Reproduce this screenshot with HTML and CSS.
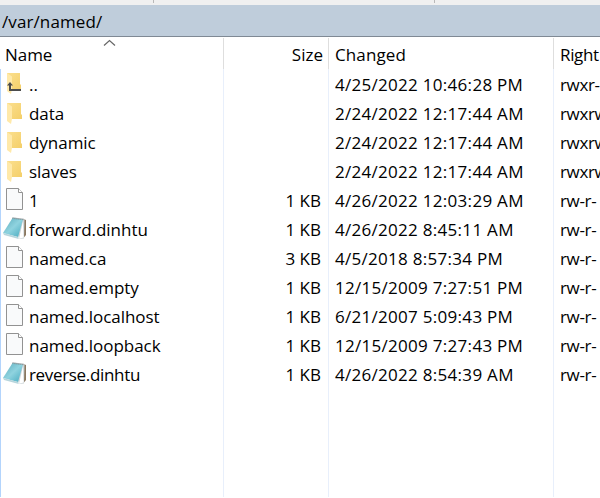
FILE: index.html
```html
<!DOCTYPE html>
<html lang="en">
<head>
<meta charset="utf-8">
<title>/var/named/</title>
<link rel="stylesheet" href="styles.css">
</head>
<body>
<svg class="defs" width="0" height="0" aria-hidden="true">
  <defs>
    <linearGradient id="gold" x1="0" x2="1" y1="0" y2="1"><stop offset="0" stop-color="#fbdf8e"/><stop offset="1" stop-color="#f4cf69"/></linearGradient>
    <linearGradient id="teal" x1="0" x2="1" y1="0" y2="1"><stop offset="0" stop-color="#58a9ba"/><stop offset=".5" stop-color="#8fd3df"/><stop offset="1" stop-color="#45a9be"/></linearGradient>
    <symbol id="folder" viewBox="0 0 26 29">
      <path d="M6 4h14v11l1 1v4H6z" fill="url(#gold)"/>
      <path d="M6 4l5 3.500v12l-1 5.500-4-3z" fill="#ffe9a9"/>
    </symbol>
    <symbol id="up" viewBox="0 0 26 29">
      <path d="M6 3h13v11l1 1v5H6z" fill="url(#gold)"/>
      <path d="M6 3l5 3.500v12l-1 5.500-4-3z" fill="#ffe9a9"/>
      <path d="M9 14v6h11" fill="none" stroke="#4c4c4c" stroke-width="2"/>
      <path d="M6 15.500l3-3.500 3 3.500z" fill="#4c4c4c"/>
    </symbol>
    <symbol id="file" viewBox="0 0 26 29">
      <path d="M5.500 2.500h12l4 4v17h-16z" fill="#f9fafb" stroke="#929292"/>
      <path d="M17.500 2.500v4h4" fill="#fff" stroke="#929292"/>
    </symbol>
    <symbol id="notepad" viewBox="0 0 26 29">
      <path d="M22.500 4l2.500 1v15L22.500 23z" fill="#8a7860"/>
      <path d="M12 2.500L23.500 4l-.5 19.500-5 .5z" fill="#cdd5d8"/>
      <path d="M22 6l.6 16.500-4.600 1.200z" fill="#fff"/>
      <path d="M11.500 3l10.500 1.500L17 22 2 18z" fill="url(#teal)"/>
      <path d="M2 18l15 4 .7 2L3 20z" fill="#b7d5dc"/>
      <path d="M11.500 3l11.500 1.500" stroke="#777f80" stroke-width="1.500" stroke-dasharray="1 1"/>
    </symbol>
  </defs>
</svg>
<div class="toolbar"><i></i><i></i><i></i></div>
<div class="path">/var/named/</div>
<main class="panel">
  <div class="row head"><div class="name">Name<svg class="sort" width="13" height="8" viewBox="0 0 13 8"><path d="M1 6.500l5.500-5 5.500 5" fill="none" stroke="#666" stroke-width="1.200"/></svg></div><div class="size">Size</div><div class="date">Changed</div><div class="rights">Right</div></div>
  <div class="list">
    <div class="row"><div class="name"><svg><use href="#up"/></svg>..</div><div class="size"></div><div class="date">4/25/2022 10:46:28 PM</div><div class="rights">rwxr-</div></div>
    <div class="row"><div class="name"><svg><use href="#folder"/></svg>data</div><div class="size"></div><div class="date">2/24/2022 12:17:44 AM</div><div class="rights">rwxrw</div></div>
    <div class="row"><div class="name"><svg><use href="#folder"/></svg>dynamic</div><div class="size"></div><div class="date">2/24/2022 12:17:44 AM</div><div class="rights">rwxrw</div></div>
    <div class="row"><div class="name"><svg><use href="#folder"/></svg>slaves</div><div class="size"></div><div class="date">2/24/2022 12:17:44 AM</div><div class="rights">rwxrw</div></div>
    <div class="row"><div class="name"><svg><use href="#file"/></svg>1</div><div class="size">1 KB</div><div class="date">4/26/2022 12:03:29 AM</div><div class="rights">rw-r-</div></div>
    <div class="row"><div class="name"><svg><use href="#notepad"/></svg>forward.dinhtu</div><div class="size">1 KB</div><div class="date">4/26/2022 8:45:11 AM</div><div class="rights">rw-r-</div></div>
    <div class="row"><div class="name"><svg><use href="#file"/></svg>named.ca</div><div class="size">3 KB</div><div class="date">4/5/2018 8:57:34 PM</div><div class="rights">rw-r-</div></div>
    <div class="row"><div class="name"><svg><use href="#file"/></svg>named.empty</div><div class="size">1 KB</div><div class="date">12/15/2009 7:27:51 PM</div><div class="rights">rw-r-</div></div>
    <div class="row"><div class="name"><svg><use href="#file"/></svg>named.localhost</div><div class="size">1 KB</div><div class="date">6/21/2007 5:09:43 PM</div><div class="rights">rw-r-</div></div>
    <div class="row"><div class="name"><svg><use href="#file"/></svg>named.loopback</div><div class="size">1 KB</div><div class="date">12/15/2009 7:27:43 PM</div><div class="rights">rw-r-</div></div>
    <div class="row"><div class="name tight"><svg><use href="#notepad"/></svg>reverse.dinhtu</div><div class="size">1 KB</div><div class="date">4/26/2022 8:54:39 AM</div><div class="rights">rw-r-</div></div>
    <div class="row fill"><div class="name"></div><div class="size"></div><div class="date"></div><div class="rights"></div></div>
  </div>
</main>
</body>
</html>
```
FILE: styles.css
```css
* { box-sizing: border-box; }
body {
  margin: 0;
  height: 498px;
  display: flex;
  flex-direction: column;
  overflow: hidden;
  background: #fff;
  color: #000;
  font: 17px/29px "Open Sans", "Noto Sans", sans-serif;
}
.defs { position: absolute; }
.toolbar {
  display: grid;
  grid-template-columns: 154px 281px 1fr;
  height: 5px;
  background: #f0f0f0;
}
.toolbar i { height: 3px; border-right: 1px solid #b9b9b9; }
.toolbar i:last-child { border: 0; }
.path {
  height: 32px;
  padding-left: 2px;
  background: #bfcddb;
  border-bottom: 1px solid #7f8994;
  line-height: 33px;
  letter-spacing: .1px;
}
.panel { flex: 1; display: flex; flex-direction: column; padding-bottom: 1px; }
.row {
  display: grid;
  grid-template-columns: 223px 105px 225px 46px;
  height: 29px;
  white-space: nowrap;
}
.row > div { border-right: 1px solid #e8effb; }
.row > .rights { border: 0; padding-left: 6px; letter-spacing: -.35px; }
.name { display: flex; letter-spacing: -.04px; }
.name svg { width: 26px; height: 29px; margin-right: 2px; flex: none; }
.tight { letter-spacing: -.33px; }
.size { text-align: right; padding-right: 7px; }
.date { padding-left: 6px; letter-spacing: .29px; }
.head {
  grid-template-columns: 224px 105px 225px 46px;
  height: 32px;
  line-height: 33px;
  padding-top: 1px;
}
.head > div { border-color: #dedede; }
.head .name { padding-left: 5px; }
.name .sort { width: 13px; height: 8px; margin: 1px 0 0 51px; }
.head .size { padding-right: 5px; }
.head .date { letter-spacing: .1px; }
.list {
  flex: 1;
  display: flex;
  flex-direction: column;
  border-left: 1px solid #b3d4fc;
}
.list .row:first-child { height: 30px; }
.list .row:first-child > div { padding-top: 1px; }
.list .fill { flex: 1; }
```
